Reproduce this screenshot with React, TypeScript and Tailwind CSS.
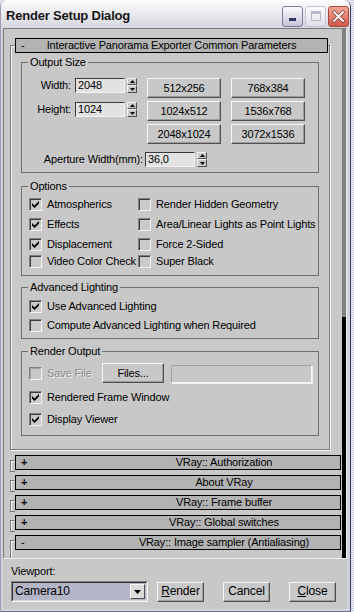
import React from "react";

function CheckMark() {
  return (
    <svg width="9" height="9" viewBox="0 0 9 9" className="block">
      <polygon points="1,3 3.5,5.5 8,1 8,3.6 3.5,8.1 1,5.6" fill="#000" />
    </svg>
  );
}

function Box({ checked, disabled }: { checked?: boolean; disabled?: boolean }) {
  return (
    <div
      className={`w-[13px] h-[13px] shrink-0 flex items-center justify-center border border-t-[#808080] border-l-[#808080] border-r-[#f2f2f2] border-b-[#f2f2f2] ${
        disabled ? "bg-[#c8c8c8] shadow-[inset_1px_1px_0_#a4a4a4]" : "bg-[#cacaca] shadow-[inset_1px_1px_0_#3c3c3c]"
      }`}
    >
      {checked && <CheckMark />}
    </div>
  );
}

function Item({ label, checked, disabled, cls }: { label: string; checked?: boolean; disabled?: boolean; cls?: string }) {
  return (
    <div className={`flex items-center gap-[5px] h-[13px] whitespace-nowrap ${cls ?? ""}`}>
      <Box checked={checked} disabled={disabled} />
      <span
        className={
          disabled ? "text-[#8a8a8a] [text-shadow:1px_1px_0_#f0f0f0] leading-[13px]" : "text-black leading-[13px]"
        }
      >
        {label}
      </span>
    </div>
  );
}

function Spinner() {
  return (
    <div className="w-[10px] h-[15px] flex flex-col shrink-0">
      <div className="h-[7px] bg-[#c8c8c8] border border-t-[#f4f4f4] border-l-[#f4f4f4] border-r-[#505050] border-b-[#505050] flex items-center justify-center">
        <svg width="5" height="3" viewBox="0 0 5 3" className="block">
          <polygon points="0,3 2.5,0 5,3" fill="#000" />
        </svg>
      </div>
      <div className="h-[8px] bg-[#c8c8c8] border border-t-[#f4f4f4] border-l-[#f4f4f4] border-r-[#505050] border-b-[#505050] flex items-center justify-center">
        <svg width="5" height="3" viewBox="0 0 5 3" className="block">
          <polygon points="0,0 5,0 2.5,3" fill="#000" />
        </svg>
      </div>
    </div>
  );
}

function Field({ value }: { value: string }) {
  return (
    <div className="h-[15px] w-[50px] shrink-0 bg-[#e2e2e2] border border-t-[#3a3a3a] border-l-[#3a3a3a] border-r-[#f4f4f4] border-b-[#f4f4f4] pl-[2px] leading-[13px] text-black">
      {value}
    </div>
  );
}

function Btn({ children, cls }: { children: React.ReactNode; cls?: string }) {
  return (
    <div
      className={`h-[20px] shrink-0 flex items-center justify-center bg-[#c8c8c8] border border-t-[#f6f6f6] border-l-[#f6f6f6] border-r-[#505050] border-b-[#505050] shadow-[inset_-1px_-1px_0_#9c9c9c] leading-[13px] ${cls ?? ""}`}
    >
      {children}
    </div>
  );
}

function Legend({ children }: { children: React.ReactNode }) {
  return <legend className="ml-[6px] px-[2px] leading-[13px] text-black">{children}</legend>;
}

function CollapsedRollout({ title, sign }: { title: string; sign: string }) {
  return (
    <div className="flex items-start h-[15px] shrink-0 ml-[6px] mt-[5px]">
      <div className="w-[5px] h-[12px] mt-[5px] shrink-0 border-l border-t border-b border-[#7c7c7c] shadow-[inset_1px_1px_0_#f4f4f4]" />
      <div className="w-[326px] h-[15px] shrink-0 overflow-hidden bg-[#b3b3b3] border border-black">
        <div className="w-[416px] grid leading-[13px]">
          <span className="col-start-1 row-start-1 justify-self-start pl-[5px] font-bold">{sign}</span>
          <span className="col-start-1 row-start-1 justify-self-center">{title}</span>
        </div>
      </div>
    </div>
  );
}

export default function App() {
  const options: [string, boolean, string, boolean, string][] = [
    ["Atmospherics", true, "Render Hidden Geometry", false, "mt-[5px]"],
    ["Effects", true, "Area/Linear Lights as Point Lights", false, "mt-[7px]"],
    ["Displacement", true, "Force 2-Sided", false, "mt-[7px]"],
    ["Video Color Check", false, "Super Black", false, "mt-[4px]"],
  ];

  return (
    <div className="w-[354px] h-[612px] flex bg-[#dfe2ef] font-['Liberation_Sans',Arial,sans-serif] text-[11px] tracking-[-0.15px] text-black overflow-hidden">
      <div className="w-[351px] h-[612px] shrink-0 flex flex-col rounded-t-[7px] overflow-hidden border-l border-r border-b border-l-[#9c9cb4] border-r-[#3a3a66] border-b-[#6e6e8c]">
        {/* Title bar */}
        <div className="h-[28px] shrink-0 flex items-center pt-[4px] pl-[5px] pr-[1px] bg-[linear-gradient(180deg,#fdfdfe_0%,#ebebf0_45%,#d6d6de_100%)]">
          <span className="font-bold text-[13px] tracking-[-0.2px] text-[#161616]">Render Setup Dialog</span>
          <div className="ml-auto flex gap-[2px]">
            <div className="w-[21px] h-[21px] rounded-[3px] border border-[#7c7ca0] bg-[linear-gradient(180deg,#fbfbfe,#c4c4d6)] flex items-end pb-[5px] pl-[6px]">
              <div className="w-[7px] h-[3px] bg-[#2e3868]" />
            </div>
            <div className="w-[21px] h-[21px] rounded-[3px] border border-[#c2c2d0] bg-[linear-gradient(180deg,#fcfcfe,#dedee6)] flex items-center justify-center">
              <div className="w-[10px] h-[10px] border border-[#b8b8c8] border-t-[3px]" />
            </div>
            <div className="w-[21px] h-[21px] rounded-[3px] border border-[#a8483c] bg-[linear-gradient(180deg,#f2a898,#d0584a)] flex items-center justify-center">
              <svg width="13" height="13" viewBox="0 0 13 13" className="block">
                <path d="M2 2 L11 11 M11 2 L2 11" stroke="#7a2a22" strokeWidth="3.2" strokeLinecap="round" />
                <path d="M2 2 L11 11 M11 2 L2 11" stroke="#ffffff" strokeWidth="2" strokeLinecap="round" />
              </svg>
            </div>
          </div>
        </div>

        {/* Body */}
        <div className="flex-1 flex flex-col bg-[#c8c8c8] border-l-2 border-r-[3px] border-b-2 border-[#d2d2dc]">
          {/* Rollout panel */}
          <div className="h-[531px] shrink-0 flex border border-t-[#7a7a7a] border-l-[#7a7a7a] border-r-[#f0f0f0] border-b-[#f0f0f0] overflow-hidden">
            <div className="w-[337px] shrink-0 flex flex-col overflow-hidden">
              {/* Expanded rollout */}
              <div className="mt-[16px] ml-[6px] w-[320px] shrink-0 border border-[#7c7c7c] shadow-[1px_1px_0_#f4f4f4,inset_1px_1px_0_#f4f4f4] pb-[13px]">
                <div className="-mt-[8px] ml-[4px] w-[313px] h-[15px] bg-[#b3b3b3] border border-black grid leading-[13px]">
                  <span className="col-start-1 row-start-1 justify-self-start pl-[5px]">-</span>
                  <span className="col-start-1 row-start-1 justify-self-center">Interactive Panorama Exporter Common Parameters</span>
                </div>

                {/* Output Size */}
                <fieldset className="mt-[3px] ml-[10px] w-[298px] border border-[#6e6e6e] pb-[5px]">
                  <Legend>Output Size</Legend>
                  <div className="flex mt-[9px]">
                    <div className="w-[125px] flex flex-col gap-[9px]">
                      <div className="flex items-center">
                        <span className="w-[49px] text-right mr-[4px] leading-[13px]">Width:</span>
                        <Field value="2048" />
                        <div className="ml-[2px]">
                          <Spinner />
                        </div>
                      </div>
                      <div className="flex items-center">
                        <span className="w-[49px] text-right mr-[4px] leading-[13px]">Height:</span>
                        <Field value="1024" />
                        <div className="ml-[2px]">
                          <Spinner />
                        </div>
                      </div>
                    </div>
                    <div className="grid grid-cols-[74px_74px] gap-x-[10px] gap-y-[3px]">
                      <Btn>512x256</Btn>
                      <Btn>768x384</Btn>
                      <Btn>1024x512</Btn>
                      <Btn>1536x768</Btn>
                      <Btn>2048x1024</Btn>
                      <Btn>3072x1536</Btn>
                    </div>
                  </div>
                  <div className="flex items-center mt-[8px]">
                    <span className="w-[121px] text-right mr-[2px] leading-[13px] whitespace-nowrap">Aperture Width(mm):</span>
                    <Field value="36,0" />
                    <div className="ml-[2px]">
                      <Spinner />
                    </div>
                  </div>
                </fieldset>

                {/* Options */}
                <fieldset className="mt-[7px] ml-[10px] w-[298px] border border-[#6e6e6e] pb-[7px]">
                  <Legend>Options</Legend>
                  {options.map(([a, ac, b, bc, mt]) => (
                    <div key={a} className={`flex ml-[7px] ${mt}`}>
                      <Item label={a} checked={ac} cls="w-[109px]" />
                      <Item label={b} checked={bc} />
                    </div>
                  ))}
                </fieldset>

                {/* Advanced Lighting */}
                <fieldset className="mt-[5px] ml-[10px] w-[298px] border border-[#6e6e6e] pb-[6px]">
                  <Legend>Advanced Lighting</Legend>
                  <Item label="Use Advanced Lighting" checked cls="ml-[7px] mt-[6px]" />
                  <Item label="Compute Advanced Lighting when Required" cls="ml-[7px] mt-[6px]" />
                </fieldset>

                {/* Render Output */}
                <fieldset className="mt-[6px] ml-[10px] w-[298px] border border-[#6e6e6e] pb-[9px]">
                  <Legend>Render Output</Legend>
                  <div className="flex items-center h-[20px] mt-[5px] ml-[7px]">
                    <Item label="Save File" disabled cls="w-[73px]" />
                    <Btn cls="w-[62px]">Files...</Btn>
                    <div className="ml-[7px] w-[141px] h-[18px] self-end bg-[#c8c8c8] border border-t-[#a4a4a4] border-l-[#a4a4a4] border-r-[#f6f6f6] border-b-[#f6f6f6] shadow-[1px_1px_0_#f0f0f0]" />
                  </div>
                  <Item label="Rendered Frame Window" checked cls="ml-[7px] mt-[8px]" />
                  <Item label="Display Viewer" checked cls="ml-[7px] mt-[9px]" />
                </fieldset>
              </div>

              {/* Collapsed rollouts */}
              <CollapsedRollout sign="+" title="VRay:: Authorization" />
              <CollapsedRollout sign="+" title="About VRay" />
              <CollapsedRollout sign="+" title="VRay:: Frame buffer" />
              <CollapsedRollout sign="+" title="VRay:: Global switches" />
              <div className="flex items-start h-[15px] shrink-0 ml-[6px] mt-[5px]">
                <div className="w-[5px] h-[30px] mt-[5px] shrink-0 border-l border-t border-[#7c7c7c] shadow-[inset_1px_1px_0_#f4f4f4]" />
                <div className="w-[326px] h-[15px] shrink-0 overflow-hidden bg-[#b3b3b3] border border-black">
                  <div className="w-[416px] grid leading-[13px]">
                    <span className="col-start-1 row-start-1 justify-self-start pl-[5px]">-</span>
                    <span className="col-start-1 row-start-1 justify-self-center">VRay:: Image sampler (Antialiasing)</span>
                  </div>
                </div>
              </div>
            </div>
            {/* Scroll indicator */}
            <div className="w-[5px] ml-[1px] shrink-0 flex flex-col">
              <div className="h-[288px] bg-[#7f7f7f]" />
              <div className="flex-1 bg-black" />
            </div>
          </div>

          {/* Bottom area */}
          <div className="flex-1 flex flex-col pl-[8px]">
            <span className="mt-[6px] leading-[13px]">Viewport:</span>
            <div className="mt-[3px] flex items-center">
              <div className="w-[137px] h-[21px] flex border border-t-[#808080] border-l-[#808080] border-r-[#f4f4f4] border-b-[#f4f4f4]">
                <div className="flex-1 flex items-center border border-t-[#303030] border-l-[#303030] border-r-[#d8d8d8] border-b-[#d8d8d8] bg-[#b4b6c8] pl-[2px] pr-[1px]">
                  <span className="flex-1 leading-[13px] text-[12px]">Camera10</span>
                  <div className="w-[15px] h-[15px] bg-[#dcdcdc] border border-t-[#f8f8f8] border-l-[#f8f8f8] border-r-[#505050] border-b-[#505050] flex items-center justify-center">
                    <svg width="7" height="4" viewBox="0 0 7 4" className="block">
                      <polygon points="0,0 7,0 3.5,4" fill="#000" />
                    </svg>
                  </div>
                </div>
              </div>
              <Btn cls="w-[47px] ml-[9px] text-[12px]">
                <span>
                  <span className="underline">R</span>ender
                </span>
              </Btn>
              <Btn cls="w-[47px] ml-[19px] text-[12px]">Cancel</Btn>
              <Btn cls="w-[47px] ml-[19px] text-[12px]">
                <span>
                  <span className="underline">C</span>lose
                </span>
              </Btn>
            </div>
          </div>
        </div>
      </div>
      <div className="flex-1 bg-[repeating-linear-gradient(180deg,#c4cce8_0px,#c4cce8_1px,#f4f6fc_1px,#f4f6fc_2px)]" />
    </div>
  );
}
